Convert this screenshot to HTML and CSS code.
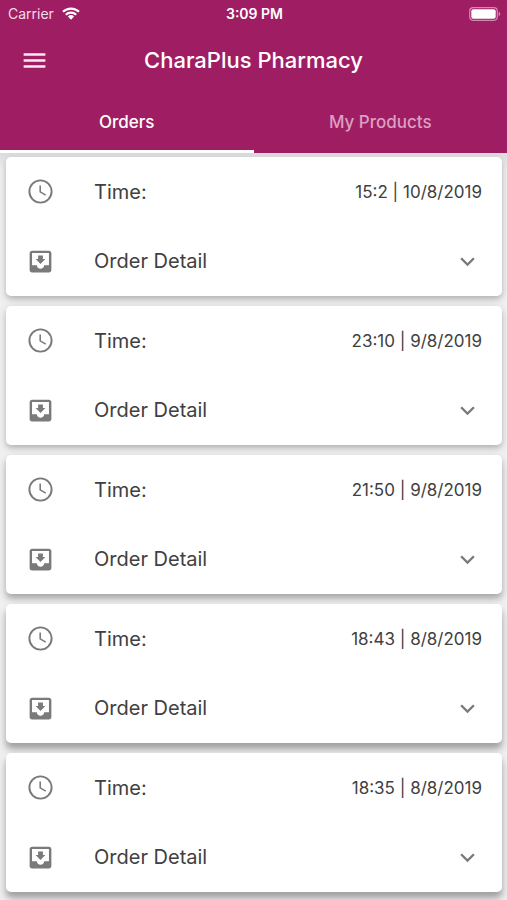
FILE: index.html

```html
<!DOCTYPE html>
<html lang="en">
<head>
<meta charset="utf-8">
<meta name="viewport" content="width=device-width, initial-scale=1">
<title>CharaPlus Pharmacy</title>
<link rel="stylesheet" href="styles.css">
</head>
<body>
<svg class="sprite" aria-hidden="true">
  <symbol id="clock" viewBox="0 0 24 24"><path d="M11.99 2C6.47 2 2 6.48 2 12s4.47 10 9.99 10C17.52 22 22 17.52 22 12S17.52 2 11.99 2zM12 20.4a8.4 8.4 0 1 1 0-16.8 8.4 8.4 0 0 1 0 16.8z"/><path d="M12.4 7h-1.3v5.7l4.9 2.9.65-1.1-4.25-2.5z"/></symbol>
  <symbol id="inbox" viewBox="0 0 24 24"><path d="M19 3H4.99c-1.11 0-1.98.9-1.98 2L3 19c0 1.1.88 2 1.99 2H19c1.1 0 2-.9 2-2V5c0-1.1-.9-2-2-2zm0 12h-4c0 1.66-1.35 3-3 3s-3-1.34-3-3H4.99V5H19v10zm-3-5h-2V7h-4v3H8l4 4 4-4z"/></symbol>
  <symbol id="chevron" viewBox="0 0 24 24"><path d="M16.59 8.59 12 13.17 7.41 8.59 6 10l6 6 6-6z"/></symbol>
</svg>
<header class="appbar">
  <div class="status">
    <div class="carrier">
      <span>Carrier</span>
      <svg class="wifi" viewBox="0 0 18 13" aria-hidden="true"><path d="M1 4.8a11.5 11.5 0 0 1 16 0M3.8 7.7a7.5 7.5 0 0 1 10.4 0" fill="none" stroke="currentColor" stroke-width="2.2"/><path d="M5.9 9.5a4.5 4.5 0 0 1 6.2 0L9 12.7z" fill="currentColor"/></svg>
    </div>
    <span class="clock">3:09 PM</span>
    <svg class="battery" viewBox="0 0 32 14" aria-hidden="true"><rect x=".7" y=".7" width="27.6" height="12.6" rx="3.5" fill="none" stroke="#d08bb1" stroke-width="1.2"/><rect x="2.3" y="2.3" width="24.4" height="9.4" rx="2" fill="#fff"/><path d="M29.7 4.8c2 .7 2 3.7 0 4.4z" fill="#d08bb1"/></svg>
  </div>
  <div class="toolbar">
    <button class="menu" type="button" aria-label="Menu"><svg class="icon" viewBox="0 0 24 24" aria-hidden="true"><path d="M3 18h18v-2H3v2zm0-5h18v-2H3v2zm0-7v2h18V6H3z"/></svg></button>
    <h1>CharaPlus Pharmacy</h1>
  </div>
  <nav class="tabs">
    <a class="tab active" href="#orders" aria-current="page">Orders</a>
    <a class="tab" href="#products">My Products</a>
  </nav>
</header>
<main class="orders" id="orders">
  <article class="card">
    <div class="row"><svg class="icon"><use href="#clock"/></svg><span class="label">Time:</span><span class="time">15:2 | 10/8/2019</span></div>
    <button class="row" type="button" aria-expanded="false"><svg class="icon"><use href="#inbox"/></svg><span class="label">Order Detail</span><svg class="icon expand"><use href="#chevron"/></svg></button>
  </article>
  <article class="card">
    <div class="row"><svg class="icon"><use href="#clock"/></svg><span class="label">Time:</span><span class="time">23:10 | 9/8/2019</span></div>
    <button class="row" type="button" aria-expanded="false"><svg class="icon"><use href="#inbox"/></svg><span class="label">Order Detail</span><svg class="icon expand"><use href="#chevron"/></svg></button>
  </article>
  <article class="card">
    <div class="row"><svg class="icon"><use href="#clock"/></svg><span class="label">Time:</span><span class="time">21:50 | 9/8/2019</span></div>
    <button class="row" type="button" aria-expanded="false"><svg class="icon"><use href="#inbox"/></svg><span class="label">Order Detail</span><svg class="icon expand"><use href="#chevron"/></svg></button>
  </article>
  <article class="card">
    <div class="row"><svg class="icon"><use href="#clock"/></svg><span class="label">Time:</span><span class="time">18:43 | 8/8/2019</span></div>
    <button class="row" type="button" aria-expanded="false"><svg class="icon"><use href="#inbox"/></svg><span class="label">Order Detail</span><svg class="icon expand"><use href="#chevron"/></svg></button>
  </article>
  <article class="card">
    <div class="row"><svg class="icon"><use href="#clock"/></svg><span class="label">Time:</span><span class="time">18:35 | 8/8/2019</span></div>
    <button class="row" type="button" aria-expanded="false"><svg class="icon"><use href="#inbox"/></svg><span class="label">Order Detail</span><svg class="icon expand"><use href="#chevron"/></svg></button>
  </article>
</main>
</body>
</html>
```

FILE: styles.css

```css
* {
  box-sizing: border-box;
}

body {
  margin: 0;
  background: #f0f0f0;
  color: #404040;
  font-family: Inter, "Liberation Sans", sans-serif;
}

button {
  border: 0;
  background: none;
  color: inherit;
  font: inherit;
  text-align: left;
  cursor: pointer;
}

.sprite {
  display: none;
}

.icon {
  display: block;
  flex: none;
  width: 29px;
  height: 29px;
  fill: currentColor;
}

.appbar {
  background: #9f1e63;
  color: #fff;
}

.status {
  display: grid;
  grid-template-columns: 1fr auto 1fr;
  align-items: center;
  height: 27px;
  padding: 0 6px 0 8px;
  font-size: 14px;
}

.carrier {
  display: flex;
  align-items: center;
  gap: 8px;
  color: #f3dce8;
}

.wifi {
  width: 18px;
  height: 13px;
  color: #fff;
}

.clock {
  font-weight: 600;
}

.battery {
  justify-self: end;
  width: 32px;
  height: 14px;
}

.toolbar {
  display: grid;
  grid-template-columns: 40px 1fr 40px;
  align-items: center;
  height: 66px;
  padding: 0 20px;
}

.menu {
  padding: 0;
  color: #fbe9f3;
}

h1 {
  margin: 0;
  font-size: 22px;
  font-weight: 500;
  line-height: 32px;
  text-align: center;
}

.tabs {
  display: grid;
  grid-template-columns: 1fr 1fr;
}

.tab {
  height: 60px;
  padding-top: 17px;
  border-bottom: 3px solid transparent;
  color: #dd9fc4;
  font-size: 17px;
  font-weight: 500;
  line-height: 24px;
  text-align: center;
  text-decoration: none;
}

.tab.active {
  border-bottom-color: #fff;
  color: #fff;
}

.orders {
  display: grid;
  gap: 10px;
  padding: 4px 5px 8px 6px;
  background: linear-gradient(#dcdcdc, #f0f0f0 16px);
}

.card {
  border-radius: 5px;
  background: #fff;
  box-shadow: 0 3px 4px rgb(0 0 0 / 12%), 0 3px 10px rgb(0 0 0 / 16%);
}

.card:nth-child(n + 3) {
  box-shadow: 0 4px 5px rgb(0 0 0 / 14%), 0 5px 10px rgb(0 0 0 / 20%);
}

.card:nth-child(n + 4) {
  box-shadow: 0 5px 5px rgb(0 0 0 / 15%), 0 7px 10px rgb(0 0 0 / 22%);
}

.row {
  display: flex;
  align-items: center;
  width: 100%;
  height: 69px;
  padding: 0 20px;
}

button.row {
  height: 70px;
}

.row .icon {
  color: #7a7a7a;
}

.label {
  flex: 1;
  margin-left: 39px;
  font-size: 20px;
}

.time {
  font-size: 17px;
}
```
